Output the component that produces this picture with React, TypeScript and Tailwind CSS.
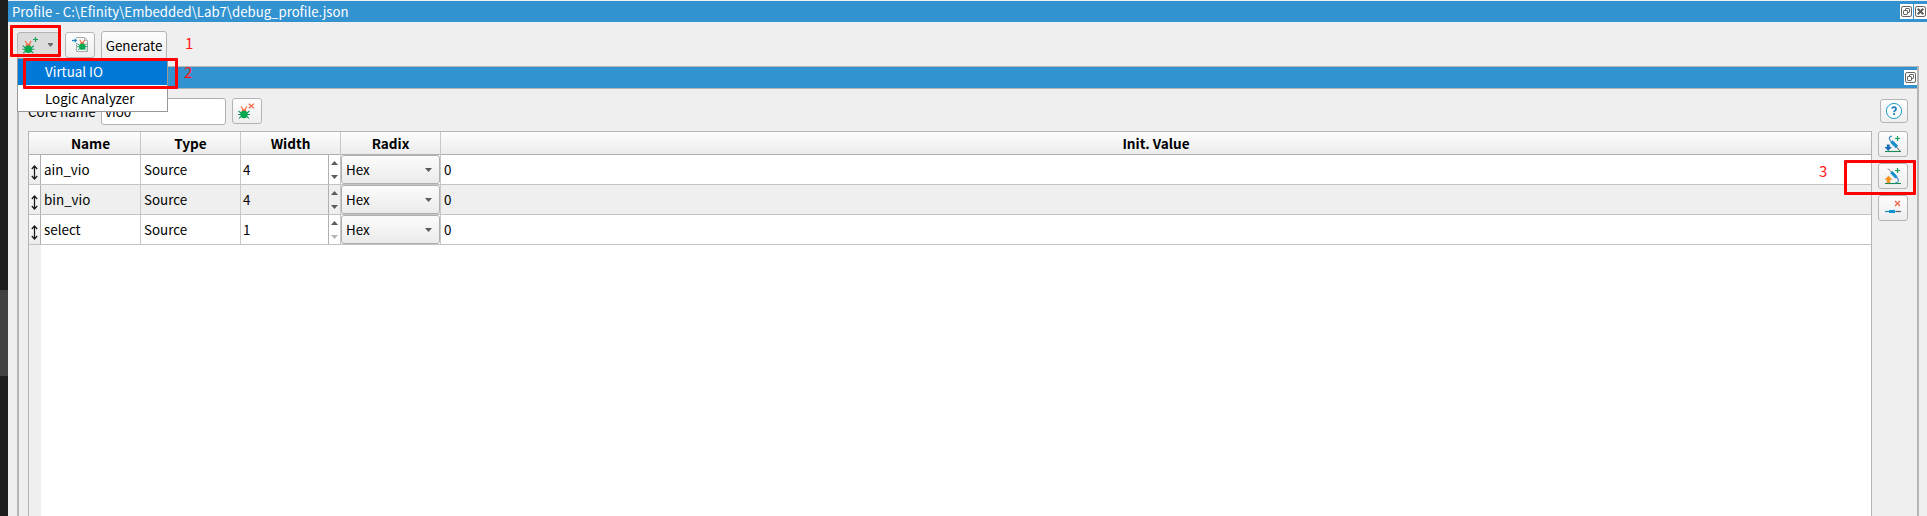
import type { ReactNode } from 'react';

const FONT = "font-['Noto_Sans_CJK_SC','Noto_Sans',sans-serif]";

function Bug() {
  return (
    <>
      <g stroke="#f26a3d" strokeWidth="1.2" fill="none">
        <path d="M3 0 5 3M9 0 7 3" />
      </g>
      <path d="M3.6 5Q3.6 2.6 6 2.6T8.4 5Z" fill="#f2683c" />
      <g stroke="#15975a" strokeWidth="1.1" fill="none">
        <path d="M0.5 4.5 3 6.5M11.5 4.5 9 6.5M0 8H3M12 8H9M1 11.8 3.4 9.8M11 11.8 8.6 9.8" />
      </g>
      <ellipse cx="6" cy="8" rx="3.7" ry="3.7" fill="#05a850" />
    </>
  );
}

function AddBugIcon() {
  return (
    <svg width="18" height="17" viewBox="0 0 18 17" className="block">
      <g transform="translate(0.3 4.2)"><Bug /></g>
      <path d="M13.5 0V5M11 2.5H16" stroke="#12a05a" strokeWidth="1.2" />
    </svg>
  );
}

function RemoveBugIcon() {
  return (
    <svg width="18" height="16" viewBox="0 0 18 16" className="block">
      <g transform="translate(0 3.5)"><Bug /></g>
      <path d="M10.8 0.8 15.8 5.2M15.8 0.8 10.8 5.2" stroke="#f0694a" strokeWidth="1.3" />
    </svg>
  );
}

function ImportIcon() {
  return (
    <svg width="17" height="16" viewBox="0 0 17 16" className="block">
      <path d="M4.5 1.5V0.5H12.5L15.5 3.5V14.5H4.5V6" fill="#f8fafa" stroke="#a4a9ad" />
      <path d="M12.5 0.5V3.5H15.5" fill="none" stroke="#b6bcc0" />
      <g transform="translate(5.1 2.8) scale(0.86)"><Bug /></g>
      <path d="M0 3.5H3.5" stroke="#1787b9" strokeWidth="1.3" />
      <path d="M2.7 1.2 5.2 3.5 2.7 5.8Z" fill="#1787b9" />
    </svg>
  );
}

function HelpIcon() {
  return (
    <svg width="18" height="18" viewBox="0 0 18 18" className="block">
      <circle cx="9" cy="9" r="7.6" fill="#fbfeff" stroke="#239ccb" strokeWidth="1" />
      <path d="M7 6.6Q7.2 5.2 9 5.2Q11 5.2 11 6.9Q11 8 9.9 8.7Q9.1 9.2 9.1 10.2" fill="none" stroke="#1c7dbb" strokeWidth="1.7" />
      <rect x="8.2" y="11.2" width="1.8" height="1.8" fill="#1c7dbb" />
    </svg>
  );
}

function ProbeDownIcon() {
  return (
    <svg width="18" height="18" viewBox="0 0 18 18" className="block">
      <path d="M1 16.5H17" stroke="#188c57" strokeWidth="1.1" />
      <path d="M8 1Q4.8 1.5 5.5 4.2Q6 5.7 7.5 7" fill="none" stroke="#1a7fbf" strokeWidth="1.1" />
      <path d="M7.5 6.5 13 12" stroke="#1690cb" strokeWidth="3.2" />
      <path d="M12 11.5 16.5 16.5" stroke="#52606b" strokeWidth="1" />
      <path d="M2.8 9.5H5.7V12H8L4.2 16 0.5 12H2.8Z" fill="#1d6fb4" />
      <path d="M13.5 1V6M11 3.5H16" stroke="#12a05a" strokeWidth="1.2" />
    </svg>
  );
}

function ProbeUpIcon() {
  return (
    <svg width="18" height="18" viewBox="0 0 18 18" className="block">
      <path d="M1 16.5H17" stroke="#188c57" strokeWidth="1.1" />
      <path d="M4 1.5 8.5 6" stroke="#68757e" strokeWidth="1" />
      <path d="M7.2 5 12.5 10.5" stroke="#1690cb" strokeWidth="3.2" />
      <path d="M12 10Q14.8 12 14.3 14Q14 15.7 11.5 15.8" fill="none" stroke="#448fcb" strokeWidth="1.1" />
      <path d="M4.5 8.8 8.5 12.8H6.2V16H2.8V12.8H0.5Z" fill="#f7931e" />
      <path d="M13.5 1V6M11 3.5H16" stroke="#12a05a" strokeWidth="1.2" />
    </svg>
  );
}

function ProbeRemoveIcon() {
  return (
    <svg width="18" height="18" viewBox="0 0 18 18" className="block">
      <path d="M1 12.5H5" stroke="#188cb4" strokeWidth="1.2" />
      <path d="M12 12.5H17" stroke="#52606b" strokeWidth="1.2" />
      <path d="M5 11H9.5L10 10.5 12 12.5 10 14.5 9.5 14H5Z" fill="#1592cb" />
      <path d="M11 2 16 7M16 2 11 7" stroke="#f0694a" strokeWidth="1.3" />
    </svg>
  );
}

function DockButton({ close = false }: { close?: boolean }) {
  return (
    <span className="block h-[15px] w-[13px] bg-white">
      <svg width="13" height="15" viewBox="0 0 13 15" className="block">
        <rect x="1.5" y="2.5" width="10" height="10" rx="1.6" fill="#fdfdfd" stroke="#63625e" />
        {close ? (
          <path d="M3.7 4.7 9.3 10.3M9.3 4.7 3.7 10.3" stroke="#5d5c58" strokeWidth="2" />
        ) : (
          <g fill="#fdfdfd" stroke="#63625e" strokeWidth="1">
            <rect x="5.5" y="4.5" width="4" height="4" rx="0.6" />
            <rect x="3.5" y="6.5" width="4" height="4" rx="0.6" />
          </g>
        )}
      </svg>
    </span>
  );
}

function ToolButton({ children, className = '' }: { children: ReactNode; className?: string }) {
  return (
    <button
      className={`flex shrink-0 items-center justify-center rounded-[3px] border border-[#b4b4b4] bg-linear-to-b from-[#fdfdfd] to-[#eeeeee] ${className}`}
    >
      {children}
    </button>
  );
}

function Triangle({ up = false, light = false }: { up?: boolean; light?: boolean }) {
  return (
    <svg width="7" height="4" viewBox="0 0 7 4" className="block">
      <path d={up ? 'M0 4 3.5 0 7 4Z' : 'M0 0H7L3.5 4Z'} fill={light ? '#b5b5b5' : '#5b5b5b'} />
    </svg>
  );
}

function MoveIcon() {
  return (
    <svg width="7" height="15" viewBox="0 0 7 15" className="block">
      <path d="M3.5 1V14M0.8 4 3.5 1 6.2 4M0.8 11 3.5 14 6.2 11" fill="none" stroke="#151515" strokeWidth="1.2" />
    </svg>
  );
}

const rows = [
  { name: 'ain_vio', type: 'Source', width: 4, radix: 'Hex', init: 0 },
  { name: 'bin_vio', type: 'Source', width: 4, radix: 'Hex', init: 0 },
  { name: 'select', type: 'Source', width: 1, radix: 'Hex', init: 0 },
];

const GRID = 'grid grid-cols-[112px_100px_100px_100px_1fr]';

function SignalTable() {
  return (
    <div className="flex h-full w-[1844px] shrink-0 flex-col border-t border-r border-l border-[#b5b5b5] bg-white">
      <div className={`${GRID} h-[23px] shrink-0 border-b border-[#b0b0b0] bg-linear-to-b from-[#fdfdfd] to-[#ececec] text-center text-[13.6px] font-bold leading-[23px]`}>
        <div className="border-r border-[#c8c8c8] pl-3">Name</div>
        <div className="border-r border-[#c8c8c8]">Type</div>
        <div className="border-r border-[#c8c8c8]">Width</div>
        <div className="border-r border-[#c8c8c8]">Radix</div>
        <div>Init. Value</div>
      </div>
      {rows.map((row, i) => (
        <div key={row.name} className={`${GRID} h-[30px] shrink-0 border-b border-[#c3c3c3] leading-[29px] ${i % 2 ? 'bg-[#efefef]' : 'bg-white'}`}>
          <div className="flex border-r border-[#c8c8c8]">
            <span className="flex h-[29px] w-[12px] shrink-0 items-end justify-center border-r border-[#b0b0b0] bg-linear-to-b from-[#fcfcfc] to-[#ededed] pb-1">
              <MoveIcon />
            </span>
            <span className="pl-[3px]">{row.name}</span>
          </div>
          <div className="border-r border-[#c8c8c8] pl-[3px]">{row.type}</div>
          <div className="flex justify-between border-r border-[#c8c8c8]">
            <span className="pl-[2px]">{row.width}</span>
            <span className="flex h-[29px] w-[12px] flex-col items-center justify-between border-l border-[#b0b0b0] pt-[6px] pb-[5px]">
              <Triangle up />
              <Triangle light={row.width === 1} />
            </span>
          </div>
          <div className="flex border-r border-[#c8c8c8]">
            <div className="flex h-[29px] w-[99px] items-center justify-between rounded-[3px] border border-[#b0b0b0] bg-linear-to-b from-[#fcfcfc] to-[#ebebeb] pr-[7px] pl-1">
              <span>{row.radix}</span>
              <Triangle />
            </div>
          </div>
          <div className="pl-[3px]">{row.init}</div>
        </div>
      ))}
      <div className="flex-1 bg-linear-to-r from-[#efefef] from-[12px] to-white to-[12px]" />
    </div>
  );
}

function AddCoreMenu() {
  return (
    <div className="absolute top-[58px] left-[17px] h-[54px] w-[151px] border border-[#989898] bg-white">
      <div className="h-[26px] bg-[#0078d7] pl-[27px] leading-[25px] text-white">Virtual IO</div>
      <div className="h-[26px] pl-[27px] leading-[27px]">Logic Analyzer</div>
    </div>
  );
}

export default function App() {
  return (
    <div className={`relative flex h-[516px] w-[1927px] overflow-hidden bg-[#efefef] text-[13.4px] whitespace-nowrap text-black ${FONT}`}>
      <aside className="flex w-2 shrink-0 flex-col bg-[#1e1e1e] pt-[290px]">
        <div className="h-[86px] bg-[#424242]" />
      </aside>
      <main className="flex min-w-0 flex-1 flex-col pt-px">
        <header className="flex h-[21px] shrink-0 items-center justify-between bg-[#3393d1] pl-1">
          <span className="text-[13.2px] leading-[21px] text-white">Profile - C:\Efinity\Embedded\Lab7\debug_profile.json</span>
          <span className="flex gap-px">
            <DockButton />
            <DockButton close />
          </span>
        </header>
        <div className="flex h-11 shrink-0 items-start pt-[9px] pl-[9px]">
          <button className="mt-px flex h-[27px] w-[43px] items-start justify-between rounded-[3px] border border-[#b4b4b4] bg-[#dcdcdc] pt-1 pr-[6px] pl-1">
            <AddBugIcon />
            <span className="pt-[6px]"><svg width="5" height="4" viewBox="0 0 5 4" className="block"><path d="M0 0H5V1L2.5 4 0 1Z" fill="#6b6b6b" /></svg></span>
          </button>
          <ToolButton className="mt-px ml-[5px] h-[26px] w-[30px]"><ImportIcon /></ToolButton>
          <ToolButton className="ml-[6px] h-[29px] w-[66px]">Generate</ToolButton>
        </div>
        <section className="mr-2 ml-[9px] flex min-h-0 flex-1 flex-col border-t border-r-2 border-l-2 border-[#b5b5b5]">
          <div className="flex h-[22px] shrink-0 items-center justify-end border-b border-[#b5b5b5] bg-[#3393d1]">
            <DockButton />
          </div>
          <div className="flex h-[42px] shrink-0 items-start pt-[9px] pl-[9px]">
            <label className="w-[73px] shrink-0 leading-[27px]">Core name</label>
            <div className="h-[27px] w-[125px] rounded-[3px] border border-[#b0b0b0] bg-white pl-[3px] leading-[25px]">vio0</div>
            <ToolButton className="ml-[6px] h-[26px] w-[30px]"><RemoveBugIcon /></ToolButton>
            <ToolButton className="mt-px mr-[9px] ml-auto h-[24px] w-[28px]"><HelpIcon /></ToolButton>
          </div>
          <div className="flex min-h-0 flex-1 pl-[9px]">
            <SignalTable />
            <div className="ml-[6px] flex flex-col gap-[6px]">
              <ToolButton className="h-[26px] w-[30px]"><ProbeDownIcon /></ToolButton>
              <ToolButton className="h-[26px] w-[30px]"><ProbeUpIcon /></ToolButton>
              <ToolButton className="h-[26px] w-[30px]"><ProbeRemoveIcon /></ToolButton>
            </div>
          </div>
        </section>
      </main>
      <AddCoreMenu />
      <div className="absolute top-[25px] left-[10px] h-[32px] w-[51px] rounded-[1px] border-3 border-[#ff0000]" />
      <div className="absolute top-[58px] left-[23px] h-[31px] w-[155px] rounded-[1px] border-3 border-[#ff0000]" />
      <div className="absolute top-[160px] left-[1844px] h-[35px] w-[72px] rounded-[1px] border-3 border-[#ff0000]" />
      <span className="absolute top-[32px] left-[185px] text-[15px] leading-[22px] text-[#ff1616]">1</span>
      <span className="absolute top-[61px] left-[184px] text-[15px] leading-[22px] text-[#ff1616]">2</span>
      <span className="absolute top-[160px] left-[1819px] text-[15px] leading-[22px] text-[#ff1616]">3</span>
    </div>
  );
}
